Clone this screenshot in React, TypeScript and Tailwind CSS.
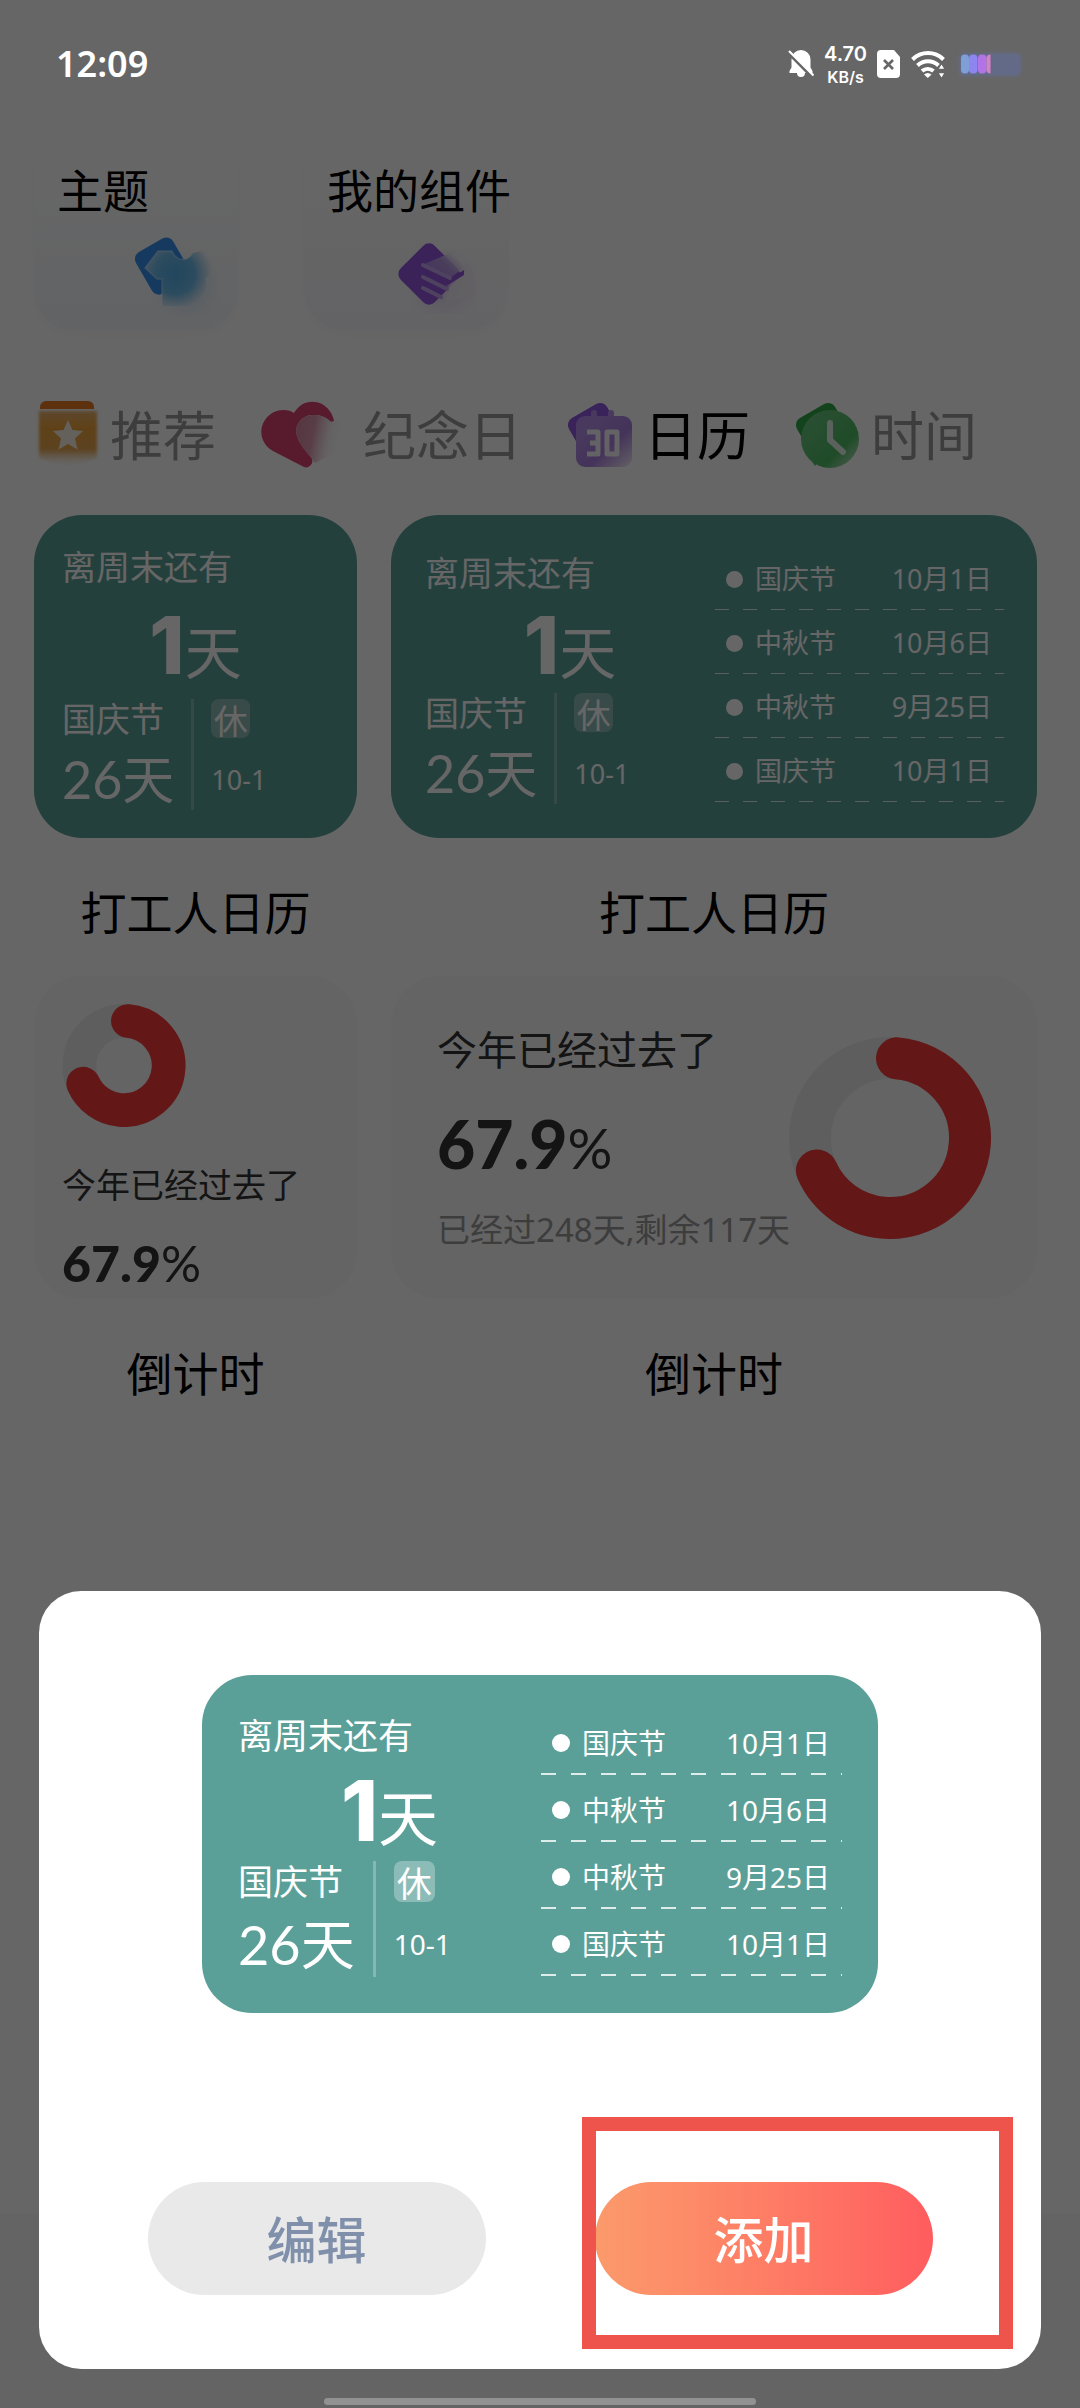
import { ReactNode } from 'react'
import clsx from 'clsx'

export default function App() {
  return (
    <div className="relative flex min-h-screen flex-col bg-white font-['Noto_Sans','Noto_Sans_CJK_SC',sans-serif] text-black">
      <header className="flex gap-[66px] px-[34px] pt-[150px]">
        <ShortcutCard title="主题" icon={<ThemeIcon />} tint="to-[#f3f7fb]" />
        <ShortcutCard title="我的组件" icon={<WidgetIcon />} tint="to-[#f8f6fb]" />
      </header>

      <nav className="mt-[68px] flex h-[72px] items-center gap-[43px] pl-[38px]">
        {tabs.map((tab) => (
          <button key={tab.label} type="button" className="flex items-center gap-3">
            {tab.icon}
            <span
              className={clsx(
                'pt-1 text-[53px] leading-[72px] whitespace-nowrap',
                tab.active ? 'text-black' : 'text-[#999]',
              )}
            >
              {tab.label}
            </span>
          </button>
        ))}
      </nav>

      <main className="mt-[45px] grid grid-cols-[1fr_2fr] gap-x-[34px] pr-[43px] pl-[34px]">
        <Tile label="打工人日历">
          <WorkerCalendar size="small" />
        </Tile>
        <Tile label="打工人日历">
          <WorkerCalendar size="wide" />
        </Tile>
        <Tile label="倒计时">
          <section className="flex h-[323px] flex-col items-start rounded-[48px] bg-[#fafafa] px-7 pt-7">
            <ProgressRing radius={45} thickness={34} />
            <p className="mt-9 text-[34px] leading-[44px] whitespace-nowrap text-[#333]">今年已经过去了</p>
            <p className="mt-5 font-['Lato',sans-serif] text-[50px] leading-[72px] text-[#333]">
              <b className="font-black">67.9</b>%
            </p>
          </section>
        </Tile>
        <Tile label="倒计时">
          <section className="flex h-[323px] items-center justify-between rounded-[48px] bg-[#fafafa] pr-[46px] pl-[46px]">
            <div className="w-0 flex-1 whitespace-nowrap">
              <p className="text-[40px] leading-[52px] text-[#333]">今年已经过去了</p>
              <p className="mt-6 font-['Lato',sans-serif] text-[56px] leading-[88px] text-[#333]">
                <b className="text-[66px] font-black">67.9</b>%
              </p>
              <p className="mt-4 text-[33px] leading-[44px] text-[#999]">已经过248天,剩余117天</p>
            </div>
            <ProgressRing radius={80} thickness={42} />
          </section>
        </Tile>
      </main>

      <footer className="mt-auto h-[195px] bg-[#f9f9f9]" />

      <div className="absolute inset-0 flex flex-col bg-black/60">
        <StatusBar />
        <AddDialog />
        <div className="mx-auto mt-[29px] mb-[3px] h-[7px] w-[432px] rounded-full bg-[#929292]" />
      </div>
    </div>
  )
}

function StatusBar() {
  return (
    <div className="flex h-[128px] items-center pr-[57px] pl-14 text-white">
      <time className="text-[36px] font-semibold">12:09</time>
      <div className="ml-auto flex items-center gap-[10px]">
        <svg width="26" height="30" viewBox="0 0 26 30" aria-label="静音">
          <path
            d="M13 1a9.500 9.500 0 0 1 9.500 9.500v8l2 3.500v2H17a4 4 0 0 1-8 0H1.500v-2l2-3.500v-8A9.500 9.500 0 0 1 13 1z"
            fill="#fff"
          />
          <path d="M-1 2.500 26 30" stroke="#666" strokeWidth="3" />
          <path d="M1 2 25.500 26.500" stroke="#fff" strokeWidth="2.200" />
        </svg>
        <div className="text-center font-['Inter',sans-serif] font-semibold">
          <div className="text-[20px] leading-[25px]">4.70</div>
          <div className="text-[16px] leading-[20px]">KB/s</div>
        </div>
        <svg width="24" height="30" viewBox="0 0 24 30" aria-label="SIM 卡">
          <path d="M4 1h13l6 7v17a4 4 0 0 1-4 4H4a4 4 0 0 1-4-4V5a4 4 0 0 1 4-4z" fill="#fff" />
          <path d="m7 11 9 9m0-9-9 9" stroke="#666" strokeWidth="2.600" />
        </svg>
        <svg width="34" height="30" viewBox="0 0 34 30" aria-label="WLAN">
          <g fill="none" stroke="#fff" strokeWidth="4">
            <path d="M1.500 10.500a22 22 0 0 1 31 0" />
            <path d="M6.500 16.500a15 15 0 0 1 21 0" />
            <path d="M11 22a9 9 0 0 1 11.500 0" />
          </g>
          <path d="M13 25.500a6 6 0 0 1 7.500 0L16.800 29z" fill="#fff" />
          <path d="M30.500 14l4 6.500h-8zM30.500 30l4-6.500h-8z" fill="#fff" stroke="#666" strokeWidth="1.500" />
        </svg>
        <svg width="68" height="30" viewBox="0 0 68 30" aria-label="电池">
          <defs>
            <filter id="battery-glow">
              <feGaussianBlur stdDeviation="1.500" />
            </filter>
          </defs>
          <rect x="4" y="4" width="62" height="23" rx="5" fill="#646a88" filter="url(#battery-glow)" />
          <rect x="6" y="5.500" width="8" height="19" rx="4" fill="#7f9fd6" />
          <rect x="14" y="5.500" width="8.500" height="19" rx="4" fill="#8c86ee" />
          <rect x="23" y="5.500" width="8.500" height="19" rx="4" fill="#b273e6" />
          <path d="M35.500 5.500v19a4 4 0 0 1-4-4v-11a4 4 0 0 1 4-4z" fill="#d581c4" />
        </svg>
      </div>
    </div>
  )
}

function ShortcutCard(props: { title: string; icon: ReactNode; tint: string }) {
  return (
    <button
      type="button"
      className={clsx(
        'flex h-[180px] w-[204px] flex-col items-start rounded-b-[40px] bg-linear-to-b from-white from-20% pt-3 pl-[23px] shadow-[0_6px_12px_rgba(0,0,0,0.02)]',
        props.tint,
      )}
    >
      <span className="text-[46px] leading-[56px] whitespace-nowrap">{props.title}</span>
      <span className="mt-[10px] ml-[70px]">{props.icon}</span>
    </button>
  )
}

function Tile(props: { label: string; children: ReactNode }) {
  return (
    <figure>
      {props.children}
      <figcaption className="mt-10 mb-[30px] text-center text-[46px] leading-[68px]">{props.label}</figcaption>
    </figure>
  )
}

function WorkerCalendar({ size }: { size: CalendarSize }) {
  const s = calendarStyles[size]

  return (
    <section className={clsx('flex bg-[#5ba098] text-left text-white', s.card)}>
      <div className={clsx('flex flex-col justify-between', s.main)}>
        <h3 className={s.text}>离周末还有</h3>
        <p className={clsx('flex items-baseline justify-center', s.headline)}>
          <b className={clsx("font-['Inter',sans-serif] font-extrabold", s.number)}>1</b>
          <span>天</span>
        </p>
        <div className={clsx('flex', s.bottom)}>
          <div>
            <p className={s.text}>国庆节</p>
            <p className={s.days}>26天</p>
          </div>
          <div className="w-[3px] bg-white/25" />
          <div>
            <span className={clsx('flex justify-center rounded-lg bg-white/30', s.badge)}>休</span>
            <p className={s.date}>10-1</p>
          </div>
        </div>
      </div>

      {size !== 'small' && (
        <ul className={clsx('flex-1', s.list)}>
          {holidays.map((holiday, i) => (
            <li key={i}>
              <div className={clsx('flex items-center', s.row)}>
                <i className={clsx('rounded-full bg-white', s.dot)} />
                <span>{holiday.name}</span>
                <time className="ml-auto">{holiday.date}</time>
              </div>
              <div className={s.rule} />
            </li>
          ))}
        </ul>
      )}
    </section>
  )
}

function ProgressRing({ radius, thickness }: { radius: number; thickness: number }) {
  const box = radius * 2 + thickness
  const c = box / 2

  return (
    <svg width={box} height={box} viewBox={`0 0 ${box} ${box}`} fill="none" strokeWidth={thickness}>
      <circle cx={c} cy={c} r={radius} stroke="#ebebeb" />
      <circle
        cx={c}
        cy={c}
        r={radius}
        stroke="#f83a3a"
        strokeLinecap="round"
        pathLength={360}
        strokeDasharray="241 119"
        transform={`rotate(-85 ${c} ${c})`}
      />
    </svg>
  )
}

function AddDialog() {
  return (
    <div role="dialog" className="mx-[39px] mt-auto flex flex-col items-center rounded-[42px] bg-white pt-[84px] pb-[74px]">
      <WorkerCalendar size="large" />
      <div className="mt-[169px] flex gap-[109px]">
        <button
          type="button"
          className="h-[113px] w-[338px] rounded-full bg-[#e9e9e9] pt-1 text-[50px] font-medium text-[#8090ab]"
        >
          编辑
        </button>
        <div className="relative">
          <button
            type="button"
            className="h-[113px] w-[338px] rounded-full bg-linear-to-r from-[#fb9a6b] to-[#ff5c5f] pt-1 text-[50px] font-medium text-white"
          >
            添加
          </button>
          <div className="pointer-events-none absolute -top-[65px] -right-[80px] -bottom-[54px] -left-[13px] border-[14px] border-[#ef544c]" />
        </div>
      </div>
    </div>
  )
}

function ThemeIcon() {
  return (
    <svg width="80" height="84" viewBox="-2 0 80 84" className="overflow-visible">
      <defs>
        <radialGradient id="shirt" gradientUnits="userSpaceOnUse" cx="46" cy="46" r="40">
          <stop offset="0" stopColor="#56b0ea" />
          <stop offset="0.5" stopColor="#6ebcec" />
          <stop offset="0.8" stopColor="#c4e0f4" stopOpacity="0.800" />
          <stop offset="1" stopColor="#fff" stopOpacity="0" />
        </radialGradient>
        <filter id="soft">
          <feGaussianBlur stdDeviation="9" />
        </filter>
      </defs>
      <circle cx="56" cy="56" r="26" fill="#cfe2f5" opacity="0.600" filter="url(#soft)" />
      <rect x="3" y="28" width="43" height="48" rx="8" fill="#3792ee" transform="rotate(-30 3 28)" />
      <path d="M16 40 29 23h14c4 10 15 12 21 2l12-3 14 17-13 11v28H33V51h-5z" fill="url(#shirt)" />
      <path
        d="M76 22 64 24c-6 11-17 9-21-1H29L16 40l12 11h5v26"
        fill="none"
        stroke="#fff"
        strokeOpacity="0.350"
        strokeWidth="1.500"
      />
    </svg>
  )
}

function WidgetIcon() {
  return (
    <svg width="88" height="84" viewBox="3 0 88 84" className="overflow-visible">
      <defs>
        <linearGradient id="layer" x1="0.2" y1="0.7" x2="0.9" y2="0.3">
          <stop offset="0" stopColor="#b287ee" />
          <stop offset="0.5" stopColor="#b79be2" />
          <stop offset="1" stopColor="#fff" stopOpacity="0.500" />
        </linearGradient>
      </defs>
      <circle cx="50" cy="54" r="26" fill="#d9c9ee" opacity="0.600" filter="url(#soft)" />
      <rect x="11" y="22" width="48" height="48" rx="8" fill="#9557e0" transform="rotate(45 35 46)" />
      <path d="M54 54 76 42 82 66 52 76z" fill="#f5f2f9" filter="url(#battery-glow)" opacity="0.800" />
      <path d="M28 37 56 25q14 2 16 13L56 50z" fill="url(#layer)" />
      <path d="M30 38 56 50 70 42v5L54 57 29 46z" fill="#9557e0" />
      <g fill="none" stroke="#c3a5ee" strokeWidth="4" strokeLinecap="round">
        <path d="m29 37 27 13" />
        <path d="m29 49 24 12" />
        <path d="m29 60 18 9" />
      </g>
    </svg>
  )
}

function RecommendIcon() {
  return (
    <svg width="60" height="68" viewBox="0 0 60 68" className="overflow-visible">
      <defs>
        <linearGradient id="pocket" x1="0" y1="0" x2="0" y2="1">
          <stop offset="0" stopColor="#e8b070" />
          <stop offset="0.3" stopColor="#eda43c" />
          <stop offset="0.7" stopColor="#e8a650" />
          <stop offset="1" stopColor="#fff" stopOpacity="0.300" />
        </linearGradient>
      </defs>
      <path d="M2 9V7a6 6 0 0 1 6-6h42a6 6 0 0 1 6 6v2z" fill="#e87a22" />
      <path d="M1 11h58v47L30 66 1 58z" fill="url(#pocket)" filter="url(#battery-glow)" />
      <path d="m30 20 4.500 10 10.500 1-8 7.500 2.500 11L30 44l-9.500 5.500 2.500-11L15 31l10.500-1z" fill="#fbf2e6" />
    </svg>
  )
}

function HeartIcon() {
  return (
    <svg width="92" height="70" viewBox="0 0 92 70">
      <defs>
        <linearGradient id="heart" x1="0" y1="0.4" x2="0.85" y2="0.55">
          <stop offset="0" stopColor="#d888a4" />
          <stop offset="0.35" stopColor="#dc9ab0" />
          <stop offset="0.7" stopColor="#f6eaee" stopOpacity="0.700" />
          <stop offset="1" stopColor="#fff" stopOpacity="0" />
        </linearGradient>
      </defs>
      <path
        d="M45 68 14 52C2 45-1 31 6 21c7-11 22-12 29-7C41 3 53 0 63 5c7 4 11 11 12 17L53 60c2 5-4 10-8 8z"
        fill="#dc4272"
      />
      <path d="M56 64c-7-11-17-18-19-31 0-11 9-18 18-17 8 0 13 3 17 7 12-6 22 4 19 16-4 12-22 18-35 25z" fill="#fff" />
      <path
        d="M56 64c-7-11-17-18-19-31 0-11 9-18 18-17 8 0 13 3 17 7 12-6 22 4 19 16-4 12-22 18-35 25z"
        fill="url(#heart)"
      />
    </svg>
  )
}

function CalendarIcon() {
  return (
    <svg width="67" height="70" viewBox="0 0 67 70" className="overflow-visible">
      <defs>
        <linearGradient id="sheet" x1="0.2" y1="0.2" x2="1" y2="1">
          <stop offset="0" stopColor="#b890ea" />
          <stop offset="0.5" stopColor="#ab80e0" />
          <stop offset="1" stopColor="#f6f0fb" />
        </linearGradient>
      </defs>
      <rect x="0" y="23" width="44" height="44" rx="8" fill="#9058e0" transform="rotate(-30 0 23)" />
      <rect x="26" y="11" width="6" height="12" rx="3" fill="#b890ea" />
      <rect x="43" y="11" width="6" height="12" rx="3" fill="#b890ea" />
      <rect x="11" y="17" width="56" height="51" rx="9" fill="url(#sheet)" />
      <g fill="none" stroke="#f8f4fd" strokeWidth="5" strokeLinejoin="round">
        <path d="M22 33h11v22H22m3-11h8" />
        <path d="M42 33h10v22H42z" />
      </g>
    </svg>
  )
}

function ClockIcon() {
  return (
    <svg width="66" height="70" viewBox="0 0 66 70" className="overflow-visible">
      <defs>
        <linearGradient id="face" x1="0.2" y1="0.2" x2="1" y2="1">
          <stop offset="0" stopColor="#66c47c" />
          <stop offset="0.6" stopColor="#4ebc64" />
          <stop offset="1" stopColor="#d4ecd8" />
        </linearGradient>
      </defs>
      <rect x="0" y="23" width="44" height="46" rx="8" fill="#30a84a" transform="rotate(-30 0 23)" />
      <path d="M22 67 12 52h20z" fill="#4ebc64" />
      <circle cx="37" cy="40" r="29" fill="url(#face)" />
      <path d="M37 24v17l13 12" fill="none" stroke="#e4f2e6" strokeWidth="6" strokeLinecap="round" strokeLinejoin="round" />
    </svg>
  )
}

const tabs = [
  { label: '推荐', icon: <RecommendIcon />, active: false },
  { label: '纪念日', icon: <HeartIcon />, active: false },
  { label: '日历', icon: <CalendarIcon />, active: true },
  { label: '时间', icon: <ClockIcon />, active: false },
]

const holidays = [
  { name: '国庆节', date: '10月1日' },
  { name: '中秋节', date: '10月6日' },
  { name: '中秋节', date: '9月25日' },
  { name: '国庆节', date: '10月1日' },
]

type CalendarSize = 'small' | 'wide' | 'large'

const regular = {
  text: 'text-[34px] leading-[40px]',
  headline: 'h-[84px] text-[57px] leading-[88px]',
  number: 'text-[80px]',
  bottom: 'h-[111px] gap-[17px]',
  days: "font-['Lato','Noto_Sans_CJK_SC',sans-serif] text-[52px] leading-[80px]",
  badge: 'h-[39px] w-[39px] text-[34px] leading-[44px]',
  date: 'mt-[22px] text-[27px] leading-[40px]',
  list: 'pt-[31px] pr-[33px]',
  row: 'h-[63px] gap-3 pt-1 pr-3 pl-[11px] text-[27px]',
  dot: 'size-[17px]',
  rule: 'h-px bg-[repeating-linear-gradient(90deg,#fffc_0_14px,transparent_14px_28px)]',
}

const calendarStyles = {
  small: {
    ...regular,
    card: 'h-[323px] rounded-[48px]',
    main: 'flex-1 px-7 pt-8 pb-7',
  },
  wide: {
    ...regular,
    card: 'h-[323px] rounded-[48px]',
    main: 'w-[324px] pt-[38px] pb-[34px] pl-[34px]',
  },
  large: {
    card: 'h-[338px] w-[676px] rounded-[50px]',
    main: 'w-[339px] pt-[40px] pb-[36px] pl-[36px]',
    text: 'text-[35px] leading-[42px]',
    headline: 'h-[88px] text-[60px] leading-[92px]',
    number: 'text-[84px]',
    bottom: 'h-[116px] gap-[18px]',
    days: "font-['Lato','Noto_Sans_CJK_SC',sans-serif] text-[54px] leading-[84px]",
    badge: 'h-[41px] w-[41px] text-[35px] leading-[46px]',
    date: 'mt-[22px] text-[28px] leading-[40px]',
    list: 'pt-[33px] pr-[36px]',
    row: 'h-[65px] gap-3 pt-1 pr-3 pl-[11px] text-[28px]',
    dot: 'size-[18px]',
    rule: 'h-[2px] bg-[repeating-linear-gradient(90deg,#fffc_0_15px,transparent_15px_30px)]',
  },
}
